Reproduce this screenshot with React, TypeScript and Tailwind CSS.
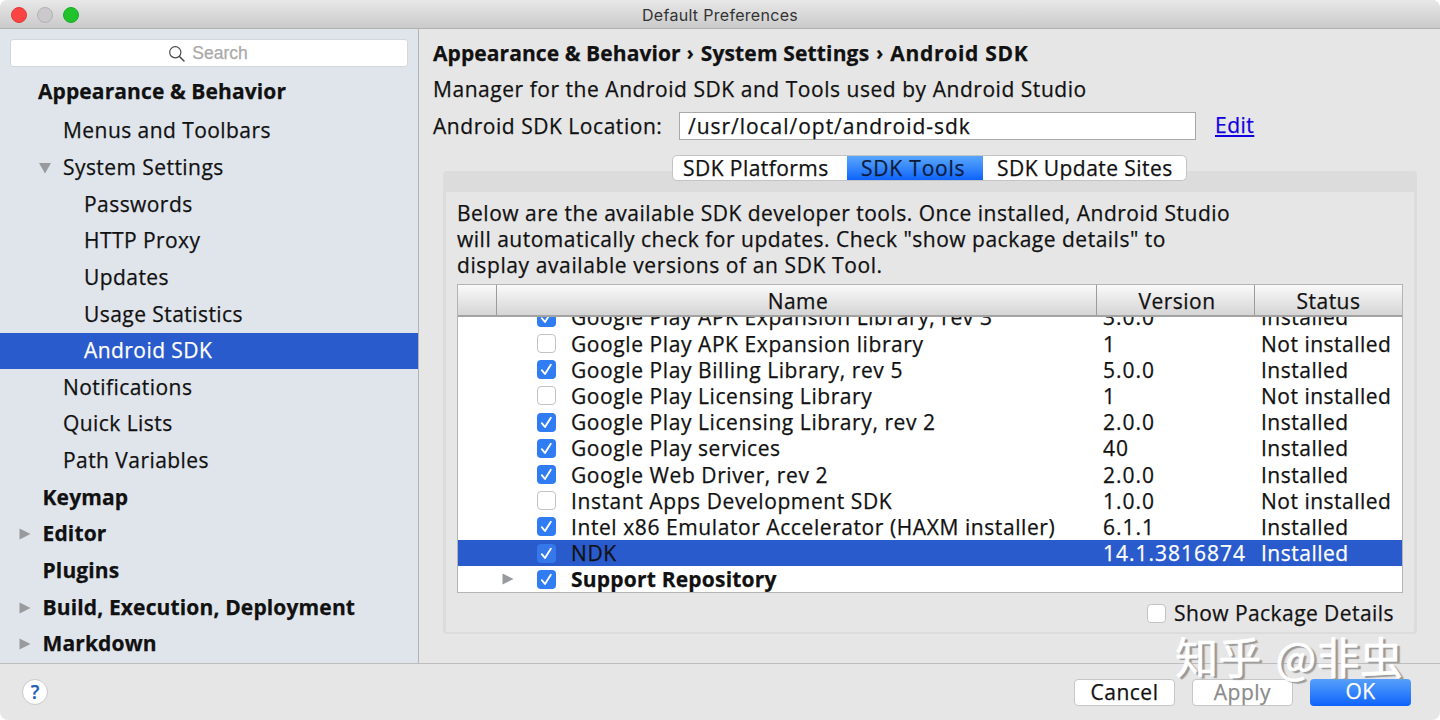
import { clsx } from "clsx";

type TreeItem = { label: string; level: number; arrow?: "down" | "right"; selected?: boolean };
type Tool = { name: string; version: string; checked: boolean; installed: boolean; selected?: boolean; group?: boolean };

const tree: TreeItem[] = [
  { label: "Menus and Toolbars", level: 1 },
  { label: "System Settings", level: 1, arrow: "down" },
  { label: "Passwords", level: 2 },
  { label: "HTTP Proxy", level: 2 },
  { label: "Updates", level: 2 },
  { label: "Usage Statistics", level: 2 },
  { label: "Android SDK", level: 2, selected: true },
  { label: "Notifications", level: 1 },
  { label: "Quick Lists", level: 1 },
  { label: "Path Variables", level: 1 },
  { label: "Keymap", level: 0 },
  { label: "Editor", level: 0, arrow: "right" },
  { label: "Plugins", level: 0 },
  { label: "Build, Execution, Deployment", level: 0, arrow: "right" },
  { label: "Markdown", level: 0, arrow: "right" },
];

const tools: Tool[] = [
  { name: "Google Play APK Expansion Library, rev 3", version: "3.0.0", checked: true, installed: true },
  { name: "Google Play APK Expansion library", version: "1", checked: false, installed: false },
  { name: "Google Play Billing Library, rev 5", version: "5.0.0", checked: true, installed: true },
  { name: "Google Play Licensing Library", version: "1", checked: false, installed: false },
  { name: "Google Play Licensing Library, rev 2", version: "2.0.0", checked: true, installed: true },
  { name: "Google Play services", version: "40", checked: true, installed: true },
  { name: "Google Web Driver, rev 2", version: "2.0.0", checked: true, installed: true },
  { name: "Instant Apps Development SDK", version: "1.0.0", checked: false, installed: false },
  { name: "Intel x86 Emulator Accelerator (HAXM installer)", version: "6.1.1", checked: true, installed: true },
  { name: "NDK", version: "14.1.3816874", checked: true, installed: true, selected: true },
  { name: "Support Repository", version: "", checked: true, installed: false, group: true },
];

function Arrow({ dir }: { dir: "down" | "right" }) {
  return (
    <svg className="size-[12px]" viewBox="0 0 12 12" fill="#989a9e">
      {dir === "down" ? <path d="M0 1h12L6 11.5z" /> : <path d="M0.5 0.5v11L11.5 6z" />}
    </svg>
  );
}

function Checkbox({ checked, flat }: { checked: boolean; flat?: boolean }) {
  if (!checked) return <div className="size-[19px] flex-none rounded-[4px] border border-[#c3c3c3] bg-white" />;
  return (
    <div className={clsx("size-[19px] flex-none rounded-[4px]", flat ? "bg-[#3478ea]" : "bg-[#2f7cf3]")}>
      <svg viewBox="0 0 19 19" className="size-full" fill="none" stroke="white" strokeWidth="1.9" strokeLinecap="round" strokeLinejoin="round">
        <path d="M4.8 10.2L8 14L13.8 4.8" />
      </svg>
    </div>
  );
}

function TreeRow({ item }: { item: TreeItem }) {
  return (
    <div
      className={clsx(
        "relative flex h-[36.67px] flex-none items-center",
        item.level === 0 && "pl-[42.5px] font-bold tracking-[0.14px]",
        item.level === 1 && "pl-[63px]",
        item.level === 2 && "pl-[84px]",
        item.selected && "bg-[#2a5bcd] text-white"
      )}
    >
      {item.arrow && (
        <span className={clsx("absolute", item.level === 0 ? "left-[19px]" : "left-[39px]")}>
          <Arrow dir={item.arrow} />
        </span>
      )}
      {item.label}
    </div>
  );
}

function ToolRow({ tool }: { tool: Tool }) {
  return (
    <div className={clsx("flex h-[26.2px] flex-none items-center leading-[26px]", tool.selected && "bg-[#2a5bcd]")}>
      <div className="flex w-[79px] flex-none items-center pl-[44px]">{tool.group && <Arrow dir="right" />}</div>
      <Checkbox checked={tool.checked} flat={tool.selected} />
      <div className={clsx("w-[547px] flex-none pl-[15px]", tool.group ? "font-bold tracking-[0.2px]" : "tracking-[0.58px]")}>{tool.name}</div>
      <div className={clsx("w-[158px] flex-none tracking-[1px]", tool.selected && "text-white")}>{tool.version}</div>
      <div className={clsx("flex-none", tool.selected && "text-white")}>{tool.group ? "" : tool.installed ? "Installed" : "Not installed"}</div>
    </div>
  );
}

export default function App() {
  return (
    <div className="h-[720px] w-[1440px] bg-white">
      <div className="relative flex size-full flex-col overflow-hidden whitespace-nowrap rounded-[8px] bg-[#e6e6e6] font-['Open_Sans',sans-serif] text-[21px] tracking-[0.5px] text-[#111] [-webkit-text-stroke-width:0.25px]">
        {/*--- title bar ---*/}
        <div className="relative flex h-[29px] flex-none items-center border-b border-[#b1b1b1] bg-linear-to-b from-[#e8e8e8] to-[#cacaca] pt-[1px] pl-[10.5px]">
          <div className="flex gap-[10px]">
            <span className="size-[16px] rounded-full border border-[#e0383a] bg-[#fc4442]" />
            <span className="size-[16px] rounded-full border border-[#b3b1b3] bg-[#cbc9cb]" />
            <span className="size-[16px] rounded-full border border-[#1aab29] bg-[#21c32c]" />
          </div>
          <div className="absolute inset-x-0 text-center font-['Inter',sans-serif] text-[16px] tracking-[0.3px] text-[#333] [-webkit-text-stroke-width:0]">Default Preferences</div>
        </div>

        <div className="flex h-[634px] flex-none">
          {/*--- sidebar ---*/}
          <div className="flex w-[419px] flex-none flex-col border-r border-[#b4b4b6] bg-[#e0e5ec] pt-[10px] tracking-[0.44px]">
            <div className="ml-[10px] flex h-[28px] w-[398px] flex-none items-center justify-center gap-[7px] rounded-[3px] border border-[#d3d6dc] bg-white pt-[1px] pr-[1px] font-['Liberation_Sans',sans-serif] text-[17.5px] tracking-normal text-[#a9a9a9]">
              <svg className="size-[16px]" viewBox="0 0 16 16" fill="none" stroke="#4a4a4a" strokeWidth="1.2" strokeLinecap="round">
                <circle cx="6.3" cy="6.3" r="5.6" />
                <path d="M10.5 10.5L15 15" strokeWidth="1.5" />
              </svg>
              Search
            </div>
            <div className="mt-[6px] mb-[3px] flex h-[36.67px] flex-none items-center pl-[38px] font-bold tracking-[0.1px]">Appearance &amp; Behavior</div>
            {tree.map((item) => (
              <TreeRow key={item.label} item={item} />
            ))}
          </div>

          {/*--- content ---*/}
          <div className="flex w-[1021px] flex-none flex-col pl-[14px]">
            <div className="mt-[6px] flex h-[37px] items-center gap-[6px] font-bold tracking-[0.08px]">
              <span>Appearance &amp; Behavior</span>
              <span className="text-[19px]">›</span>
              <span className="pl-[1px] tracking-[0.15px]">System Settings</span>
              <span className="pl-[1px] text-[19px]">›</span>
              <span className="pl-[1px] tracking-[0.7px]">Android SDK</span>
            </div>
            <div className="flex h-[36px] items-center tracking-[0.54px]">Manager for the Android SDK and Tools used by Android Studio</div>
            <div className="flex h-[36px] items-center">
              <div className="w-[246px] pt-[1px] tracking-[0.54px]">Android SDK Location:</div>
              <div className="flex h-[28px] w-[517px] items-center border border-[#a9a9a9] bg-white pl-[8px] leading-none tracking-[0.97px]">/usr/local/opt/android-sdk</div>
              <a className="ml-[19px] text-[#1300e0] underline decoration-2 underline-offset-2">Edit</a>
            </div>

            {/*--- tabs ---*/}
            <div className="relative z-10 mt-[11px] -mb-[10px] ml-[239px] flex h-[26px] w-[515px] flex-none overflow-hidden rounded-[5px] border border-[#c4c4c4] bg-white leading-[25px] tracking-[0.44px]">
              <div className="w-[174px] pl-[10px]">SDK Platforms</div>
              <div className="w-[136px] bg-linear-to-b from-[#5aa6fb] to-[#0d62fb] pl-[14px] tracking-[0.8px] text-[#0b1d3a]">SDK Tools</div>
              <div className="flex-1 pl-[14px]">SDK Update Sites</div>
            </div>

            {/*--- tab panel ---*/}
            <div className="ml-[10px] flex h-[463px] w-[974px] flex-none flex-col rounded-[4px] border-x-[3px] border-t-[21px] border-b-2 border-[#dcdcdc] px-[11px]">
              <div className="pt-[7.5px] leading-[26.3px]">
                Below are the available SDK developer tools. Once installed, Android Studio
                <br />
                will automatically check for updates. Check "show package details" to
                <br />
                <span className="tracking-[0.6px]">display available versions of an SDK Tool.</span>
              </div>

              {/*--- tools table ---*/}
              <div className="mt-[6px] h-[309px] w-[946px] flex-none border border-[#b4b4b4] bg-white">
                <div className="flex h-[32px] border-b-2 border-[#a3a3a3] bg-linear-to-b from-[#fafafa] to-[#d5d5d5] text-center leading-[32px]">
                  <div className="w-[39px] border-r border-[#9b9b9b]" />
                  <div className="w-[600px] border-r border-[#9b9b9b] pl-[3px]">Name</div>
                  <div className="w-[158px] border-r border-[#9b9b9b] pl-[3px]">Version</div>
                  <div className="flex-1">Status</div>
                </div>
                <div className="flex h-[275px] flex-col justify-end overflow-hidden">
                  {tools.map((tool) => (
                    <ToolRow key={tool.name} tool={tool} />
                  ))}
                </div>
              </div>

              <div className="mt-[6px] flex h-[28px] items-center justify-end gap-[8px] pr-[9px] tracking-[0.44px]">
                <Checkbox checked={false} />
                Show Package Details
              </div>
            </div>
          </div>
        </div>

        {/*--- footer ---*/}
        <div className="flex flex-1 items-center border-t border-[#bdbdbd] pr-[29px] pl-[22px] leading-[25px]">
          <div className="flex size-[26px] items-center justify-center rounded-full border border-[#c9c9c9] bg-white text-[19px] font-semibold tracking-normal text-[#2a5fb8]">?</div>
          <div className="ml-auto flex gap-[17px] text-center">
            <div className="h-[27px] w-[101px] rounded-[4px] border border-[#c6c6c6] bg-white">Cancel</div>
            <div className="h-[27px] w-[101px] rounded-[4px] border border-[#c6c6c6] bg-white text-[#8b8b8b]">Apply</div>
            <div className="h-[27px] w-[101px] rounded-[4px] bg-linear-to-b from-[#559ffa] to-[#0d62fb] text-white">OK</div>
          </div>
        </div>

        {/*--- watermark ---*/}
        <div className="absolute top-[625px] left-[1175px] font-['Noto_Sans_CJK_SC',sans-serif] text-[43px] leading-[60px] tracking-[0.3px] text-white [-webkit-text-stroke-width:0.6px] [text-shadow:3px_2px_1px_#999] [word-spacing:4px]">知乎 @非虫</div>
      </div>
    </div>
  );
}
